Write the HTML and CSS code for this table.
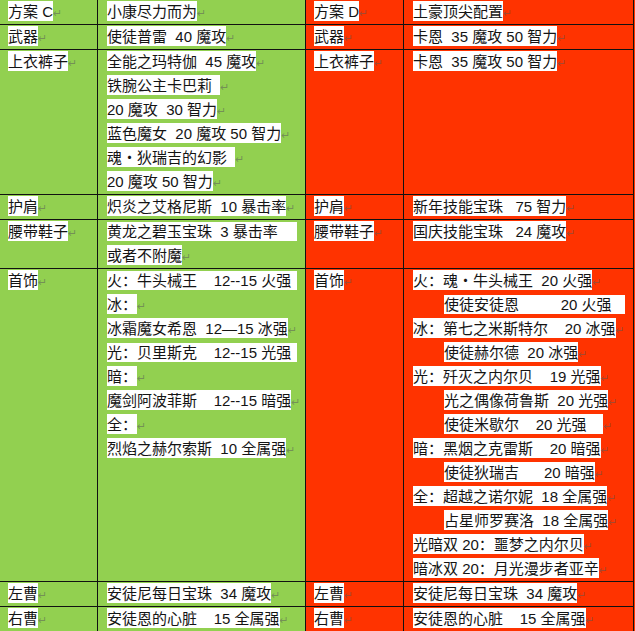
FILE: index.html
```html
<!DOCTYPE html>
<html lang="zh-CN">
<head>
<meta charset="utf-8">
<title>方案 C / 方案 D</title>
<link rel="stylesheet" href="styles.css">
</head>
<body>
<div class="sheet">
  <!-- row 1 -->
  <div class="c g k"><p class="ln"><span class="hl">方案 C</span><span class="pm">↵</span></p></div>
  <div class="c g v"><p class="ln"><span class="hl">小康尽力而为</span><span class="pm">↵</span></p></div>
  <div class="c r k"><p class="ln"><span class="hl">方案 D</span><span class="pm">↵</span></p></div>
  <div class="c r v"><p class="ln"><span class="hl">土豪顶尖配置</span><span class="pm">↵</span></p></div>

  <!-- row 2 -->
  <div class="c g k"><p class="ln"><span class="hl">武器</span><span class="pm">↵</span></p></div>
  <div class="c g v"><p class="ln"><span class="hl">使徒普雷  40 魔攻</span><span class="pm">↵</span></p></div>
  <div class="c r k"><p class="ln"><span class="hl">武器</span><span class="pm">↵</span></p></div>
  <div class="c r v"><p class="ln"><span class="hl">卡恩  35 魔攻 50 智力</span><span class="pm">↵</span></p></div>

  <!-- row 3 -->
  <div class="c g k"><p class="ln"><span class="hl">上衣裤子</span><span class="pm">↵</span></p></div>
  <div class="c g v">
    <p class="ln"><span class="hl">全能之玛特伽  45 魔攻</span><span class="pm">↵</span></p>
    <p class="ln"><span class="hl">铁腕公主卡巴莉  </span><span class="pm">↵</span></p>
    <p class="ln"><span class="hl">20 魔攻  30 智力</span><span class="pm">↵</span></p>
    <p class="ln"><span class="hl">蓝色魔女  20 魔攻 50 智力</span><span class="pm">↵</span></p>
    <p class="ln"><span class="hl">魂・狄瑞吉的幻影  </span><span class="pm">↵</span></p>
    <p class="ln"><span class="hl">20 魔攻 50 智力</span><span class="pm">↵</span></p>
  </div>
  <div class="c r k"><p class="ln"><span class="hl">上衣裤子</span><span class="pm">↵</span></p></div>
  <div class="c r v"><p class="ln"><span class="hl">卡恩  35 魔攻 50 智力</span><span class="pm">↵</span></p></div>

  <!-- row 4 -->
  <div class="c g k"><p class="ln"><span class="hl">护肩</span><span class="pm">↵</span></p></div>
  <div class="c g v"><p class="ln"><span class="hl">炽炎之艾格尼斯  10 暴击率</span><span class="pm">↵</span></p></div>
  <div class="c r k"><p class="ln"><span class="hl">护肩</span><span class="pm">↵</span></p></div>
  <div class="c r v"><p class="ln"><span class="hl">新年技能宝珠   75 智力</span><span class="pm">↵</span></p></div>

  <!-- row 5 -->
  <div class="c g k"><p class="ln"><span class="hl">腰带鞋子</span><span class="pm">↵</span></p></div>
  <div class="c g v">
    <p class="ln fill">黄龙之碧玉宝珠  3 暴击率</p>
    <p class="ln"><span class="hl">或者不附魔</span><span class="pm">↵</span></p>
  </div>
  <div class="c r k"><p class="ln"><span class="hl">腰带鞋子</span><span class="pm">↵</span></p></div>
  <div class="c r v"><p class="ln"><span class="hl">国庆技能宝珠   24 魔攻</span><span class="pm">↵</span></p></div>

  <!-- row 6 -->
  <div class="c g k"><p class="ln"><span class="hl">首饰</span><span class="pm">↵</span></p></div>
  <div class="c g v">
    <p class="ln fill">火：牛头械王    12--15 火强</p>
    <p class="ln"><span class="hl">冰：</span><span class="pm">↵</span></p>
    <p class="ln"><span class="hl">冰霜魔女希恩  12—15 冰强</span><span class="pm">↵</span></p>
    <p class="ln fill">光：贝里斯克    12--15 光强</p>
    <p class="ln"><span class="hl">暗：</span><span class="pm">↵</span></p>
    <p class="ln"><span class="hl">魔剑阿波菲斯    12--15 暗强</span><span class="pm">↵</span></p>
    <p class="ln"><span class="hl">全：</span><span class="pm">↵</span></p>
    <p class="ln"><span class="hl">烈焰之赫尔索斯  10 全属强</span><span class="pm">↵</span></p>
  </div>
  <div class="c r k"><p class="ln"><span class="hl">首饰</span><span class="pm">↵</span></p></div>
  <div class="c r v">
    <p class="ln"><span class="hl">火：魂・牛头械王  20 火强</span><span class="pm">↵</span></p>
    <p class="ln fill ind">使徒安徒恩          20 火强</p>
    <p class="ln"><span class="hl">冰：第七之米斯特尔    20 冰强</span><span class="pm">↵</span></p>
    <p class="ln ind"><span class="hl">使徒赫尔德  20 冰强</span><span class="pm">↵</span></p>
    <p class="ln"><span class="hl">光：歼灭之内尔贝    19 光强</span><span class="pm">↵</span></p>
    <p class="ln ind"><span class="hl">光之偶像荷鲁斯  20 光强</span><span class="pm">↵</span></p>
    <p class="ln ind"><span class="hl">使徒米歇尔    20 光强    </span><span class="pm">↵</span></p>
    <p class="ln"><span class="hl">暗：黑烟之克雷斯    20 暗强</span><span class="pm">↵</span></p>
    <p class="ln ind"><span class="hl">使徒狄瑞吉      20 暗强</span><span class="pm">↵</span></p>
    <p class="ln"><span class="hl">全：超越之诺尔妮  18 全属强</span><span class="pm">↵</span></p>
    <p class="ln ind"><span class="hl">占星师罗赛洛  18 全属强</span><span class="pm">↵</span></p>
    <p class="ln"><span class="hl">光暗双 20：噩梦之内尔贝</span><span class="pm">↵</span></p>
    <p class="ln"><span class="hl">暗冰双 20：月光漫步者亚辛</span><span class="pm">↵</span></p>
  </div>

  <!-- row 7 -->
  <div class="c g k"><p class="ln"><span class="hl">左曹</span><span class="pm">↵</span></p></div>
  <div class="c g v"><p class="ln"><span class="hl">安徒尼每日宝珠  34 魔攻</span><span class="pm">↵</span></p></div>
  <div class="c r k"><p class="ln"><span class="hl">左曹</span><span class="pm">↵</span></p></div>
  <div class="c r v"><p class="ln"><span class="hl">安徒尼每日宝珠  34 魔攻</span><span class="pm">↵</span></p></div>

  <!-- row 8 -->
  <div class="c g k"><p class="ln"><span class="hl">右曹</span><span class="pm">↵</span></p></div>
  <div class="c g v"><p class="ln"><span class="hl">安徒恩的心脏    15 全属强</span><span class="pm">↵</span></p></div>
  <div class="c r k"><p class="ln"><span class="hl">右曹</span><span class="pm">↵</span></p></div>
  <div class="c r v"><p class="ln"><span class="hl">安徒恩的心脏    15 全属强</span><span class="pm">↵</span></p></div>
</div>
</body>
</html>
```

FILE: styles.css
```css
html, body {
  margin: 0;
  padding: 0;
}

body {
  background: #ff3300;
  font-family: "Liberation Sans", "Noto Sans CJK SC", sans-serif;
  font-size: 15px;
  color: #141414;
}

.sheet {
  display: grid;
  grid-template-columns: 97px 207px 97px 229px;
  gap: 1px;
  width: max-content;
  background: #111;
  border-right: 1px solid #111;
  border-bottom: 1px solid #111;
}

.c {
  line-height: 24px;
  padding: 0 8px 0 9px;
}

.c.k {
  padding-left: 8px;
}

.g {
  background: #92d050;
}

.r {
  background: #ff3300;
}

.ln {
  margin: 0;
  white-space: pre;
  height: 24px;
}

.hl {
  background: #fff;
  padding: 2px 0 1px;
}

.pm {
  font-family: "DejaVu Sans", sans-serif;
  font-size: 11px;
  color: rgba(90, 90, 90, 0.55);
}

.ind {
  padding-left: 31px;
}

.fill {
  background-image: linear-gradient(#fff, #fff);
  background-repeat: no-repeat;
  background-origin: content-box;
  background-clip: content-box;
  background-size: 100% 19px;
  background-position: 0 2px;
}
```
